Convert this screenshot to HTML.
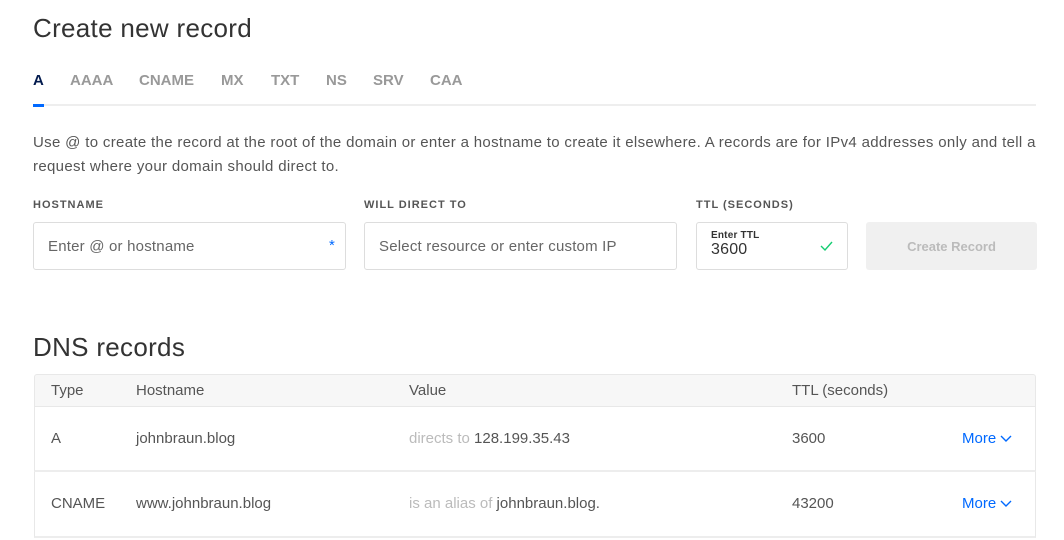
<!DOCTYPE html>
<html><head><style>
*{margin:0;padding:0;box-sizing:border-box}
body{width:1064px;height:540px;overflow:hidden;background:#fff;font-family:"Liberation Sans",sans-serif;color:#444;position:relative}
.a{position:absolute;white-space:nowrap}
h1{position:absolute;font-weight:400;font-size:26px;color:#333;left:33px;letter-spacing:0.3px}
.tab{position:absolute;top:72px;font-size:15px;font-weight:700;color:#999}
.lbl{position:absolute;top:199px;font-size:11px;font-weight:700;letter-spacing:1px;color:#555}
.inp{position:absolute;top:222px;height:48px;border:1px solid #ddd;border-radius:3px;font-size:15px;color:#666;padding:15px 14px;letter-spacing:0.2px}
.row{position:absolute;left:34px;width:1002px;border:1px solid #e8e8e8;font-size:15px;color:#555}
.more{color:#0069ff}
</style></head><body>
<h1 style="top:13px">Create new record</h1>
<div class="tab" style="left:33px;color:#031b4e">A</div>
<div class="tab" style="left:70px">AAAA</div>
<div class="tab" style="left:139px">CNAME</div>
<div class="tab" style="left:221px">MX</div>
<div class="tab" style="left:271px">TXT</div>
<div class="tab" style="left:326px">NS</div>
<div class="tab" style="left:373px">SRV</div>
<div class="tab" style="left:430px">CAA</div>
<div class="a" style="left:33px;top:104px;width:1003px;height:2px;background:#eee"></div>
<div class="a" style="left:33px;top:104px;width:11px;height:3px;background:#0069ff"></div>
<div class="a" style="left:33px;top:131px;font-size:15px;line-height:24px;color:#555;letter-spacing:0.33px">Use @ to create the record at the root of the domain or enter a hostname to create it elsewhere. A records are for IPv4 addresses only and tell a<br>request where your domain should direct to.</div>
<div class="lbl" style="left:33px">HOSTNAME</div>
<div class="lbl" style="left:364px">WILL DIRECT TO</div>
<div class="lbl" style="left:696px">TTL (SECONDS)</div>
<div class="inp" style="left:33px;width:313px">Enter @ or hostname<span style="position:absolute;right:10px;top:14px;color:#0069ff">*</span></div>
<div class="inp" style="left:364px;width:313px">Select resource or enter custom IP</div>
<div class="inp" style="left:696px;width:152px;padding:7px 14px"><div style="font-size:10px;font-weight:700;color:#333">Enter TTL</div><div style="font-size:16px;color:#333">3600</div>
<svg style="position:absolute;right:14px;top:18px" width="13" height="10" viewBox="0 0 13 10"><path d="M1 5l4 4 7-8" fill="none" stroke="#15cd72" stroke-width="1.4"/></svg></div>
<div class="a" style="left:866px;top:222px;width:171px;height:48px;background:#f0f0f0;border-radius:3px;color:#bbb;font-size:13px;text-align:center;line-height:50px;font-weight:700">Create Record</div>
<h1 style="top:332px">DNS records</h1>
<div class="row" style="top:374px;height:33px;background:#f7f7f7;border-radius:3px 3px 0 0">
<div class="a" style="left:16px;top:7px">Type</div><div class="a" style="left:101px;top:7px">Hostname</div><div class="a" style="left:374px;top:7px">Value</div><div class="a" style="left:757px;top:7px">TTL (seconds)</div></div>
<div class="row" style="top:406px;height:66px;border-top:0;border-bottom:2px solid #ededed">
<div class="a" style="left:16px;top:24px">A</div><div class="a" style="left:101px;top:24px">johnbraun.blog</div><div class="a" style="left:374px;top:24px"><span style="color:#bbb">directs to </span>128.199.35.43</div><div class="a" style="left:757px;top:24px">3600</div><div class="a more" style="left:927px;top:24px">More <svg width="12" height="8" viewBox="0 0 12 8"><path d="M1 1l5 5 5-5" fill="none" stroke="#0069ff" stroke-width="1.4"/></svg></div></div>
<div class="row" style="top:472px;height:66px;border-top:0;border-bottom:2px solid #ededed">
<div class="a" style="left:16px;top:23px">CNAME</div><div class="a" style="left:101px;top:23px">www.johnbraun.blog</div><div class="a" style="left:374px;top:23px"><span style="color:#bbb">is an alias of </span>johnbraun.blog.</div><div class="a" style="left:757px;top:23px">43200</div><div class="a more" style="left:927px;top:23px">More <svg width="12" height="8" viewBox="0 0 12 8"><path d="M1 1l5 5 5-5" fill="none" stroke="#0069ff" stroke-width="1.4"/></svg></div></div>
</body></html>
